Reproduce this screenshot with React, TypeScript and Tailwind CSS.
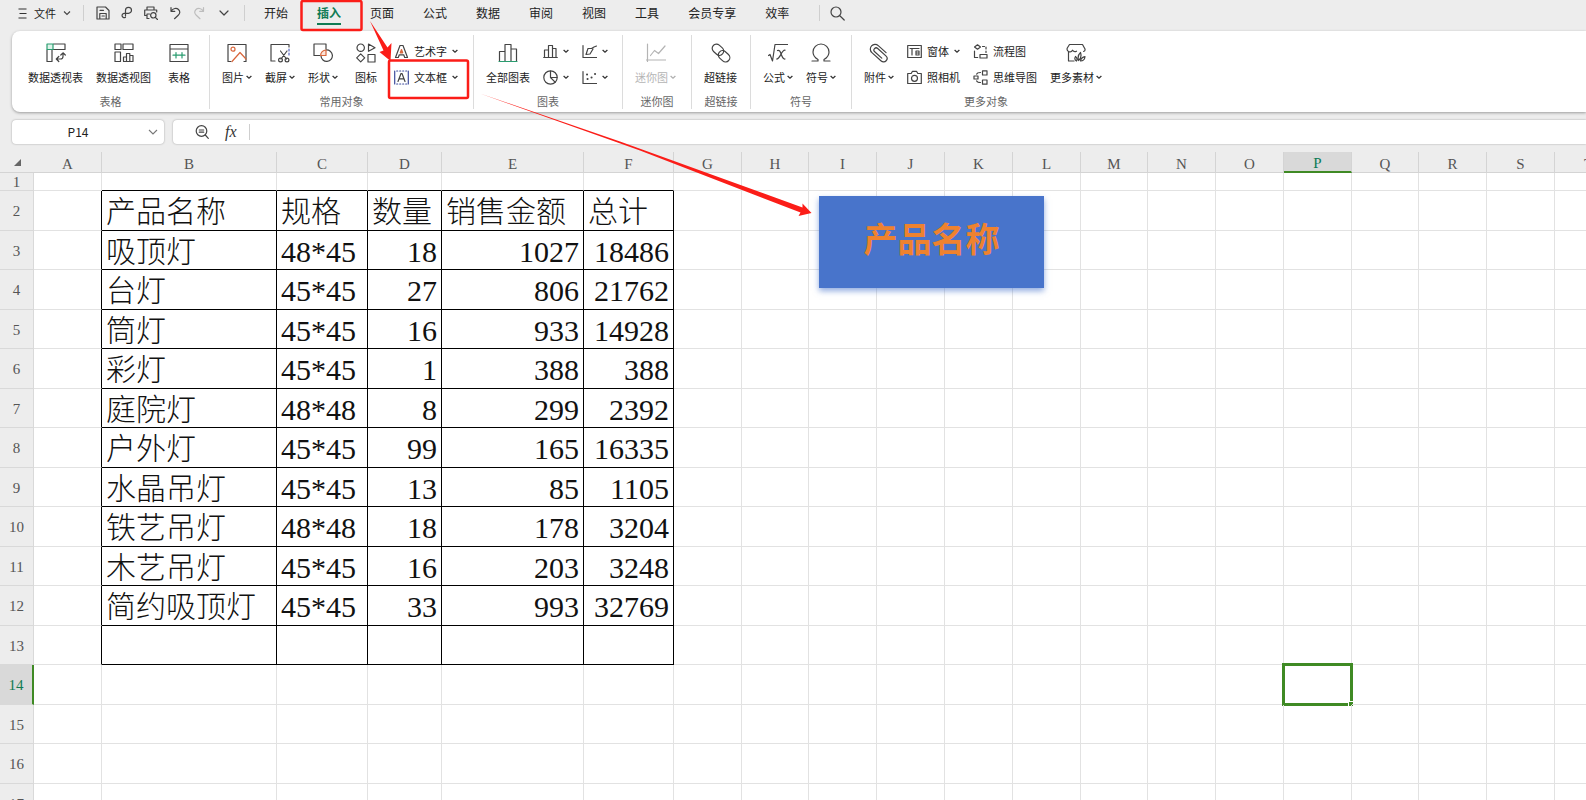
import React, { useState, ChangeEvent, ReactNode } from 'react'

const columns = [
  { name: 'A', width: 68 },
  { name: 'B', width: 175 },
  { name: 'C', width: 91 },
  { name: 'D', width: 74 },
  { name: 'E', width: 142 },
  { name: 'F', width: 90 },
  { name: 'G', width: 68 },
  { name: 'H', width: 67 },
  { name: 'I', width: 68 },
  { name: 'J', width: 68 },
  { name: 'K', width: 68 },
  { name: 'L', width: 68 },
  { name: 'M', width: 67 },
  { name: 'N', width: 68 },
  { name: 'O', width: 68 },
  { name: 'P', width: 68 },
  { name: 'Q', width: 67 },
  { name: 'R', width: 68 },
  { name: 'S', width: 68 },
  { name: 'T', width: 68 },
];

const rowHeaderWidth = 34;
const sheetWidth = columns.reduce((sum, col) => sum + col.width, rowHeaderWidth);

const rows: string[][] = [
  [],
  ['产品名称', '规格', '数量', '销售金额', '总计'],
  ['吸顶灯', '48*45', '18', '1027', '18486'],
  ['台灯', '45*45', '27', '806', '21762'],
  ['筒灯', '45*45', '16', '933', '14928'],
  ['彩灯', '45*45', '1', '388', '388'],
  ['庭院灯', '48*48', '8', '299', '2392'],
  ['户外灯', '45*45', '99', '165', '16335'],
  ['水晶吊灯', '45*45', '13', '85', '1105'],
  ['铁艺吊灯', '48*48', '18', '178', '3204'],
  ['木艺吊灯', '45*45', '16', '203', '3248'],
  ['简约吸顶灯', '45*45', '33', '993', '32769'],
  [],
  [],
  [],
  [],
  [],
];

const tabs = ['开始', '插入', '页面', '公式', '数据', '审阅', '视图', '工具', '会员专享', '效率'];

// Row 1 is short, the others share the same pitch
const rowHeight = (row: number) => {
  if (row === 1) return 18;
  return row % 2 === 0 ? 40 : 39;
};

const Icon = ({ size = 20, children }: { size?: number; children: ReactNode }) => (
  <svg width={size} height={size} viewBox={`0 0 ${size} ${size}`} fill="none" stroke="#444" strokeWidth="1.2" strokeLinejoin="round" strokeLinecap="round" aria-hidden="true" className="shrink-0">
    {children}
  </svg>
);

const Chevron = ({ light = false }: { light?: boolean }) => (
  <svg width="6" height="6" viewBox="0 0 6 6" fill="none" stroke={light ? '#b0b0b0' : '#333'} strokeWidth="1.3" aria-hidden="true" className="shrink-0">
    <path d="M.6 2 3 4.2 5.4 2" />
  </svg>
);

const BigButton = ({ icon, label, menu = false, disabled = false, width = 'w-auto' }: { icon: ReactNode; label: string; menu?: boolean; disabled?: boolean; width?: string }) => (
  <button type="button" disabled={disabled} className={`flex flex-col items-center gap-[6px] text-[11px] leading-4 whitespace-nowrap ${width} ${disabled ? 'text-[#b4b4b4]' : 'text-[#222]'}`}>
    {icon}
    <span className="flex items-center gap-[2px]">
      {label}
      {menu && <Chevron light={disabled} />}
    </span>
  </button>
);

const SmallButton = ({ icon, label, title, menu = false }: { icon: ReactNode; label?: string; title?: string; menu?: boolean }) => (
  <button type="button" aria-label={title} className="flex h-4 items-center gap-[5px] text-[11px] leading-4 whitespace-nowrap text-[#222]">
    {icon}
    {label}
    {menu && <Chevron />}
  </button>
);

const Stack = ({ children }: { children: ReactNode }) => (
  <div className="flex flex-col gap-[10px]">{children}</div>
);

const Group = ({ label, className, children }: { label: string; className: string; children: ReactNode }) => (
  <div className={`flex h-[74px] shrink-0 flex-col justify-between border-[#dcdcdc] ${className}`}>
    <div className="flex gap-[13px] pt-2 pl-3">{children}</div>
    <div className="text-center text-[11px] leading-4 text-[#666]">{label}</div>
  </div>
);

const QuickButton = ({ title, children }: { title: string; children: ReactNode }) => (
  <button type="button" aria-label={title} className="flex h-5 items-center">
    <Icon size={14}>{children}</Icon>
  </button>
);

const Divider = ({ className }: { className: string }) => (
  <span className={`h-4 w-px shrink-0 bg-[#cfcfcf] ${className}`} />
);

const TitleBar = ({ active, onChange }: { active: string; onChange: (tab: string) => void }) => (
  <div className="flex h-[31px] items-start pt-[3px] pl-[18px] text-[#222]">
    <button type="button" className="flex h-5 shrink-0 items-center text-[11px]">
      <svg width="9" height="11" viewBox="0 0 9 11" fill="none" stroke="#333" strokeWidth="1.1" aria-hidden="true">
        <path d="M.5 1h8M1.5 5.500h7M.5 10h8" />
      </svg>
      <span className="mx-[7px]">文件</span>
      <svg width="8" height="6" viewBox="0 0 8 6" fill="none" stroke="#444" strokeWidth="1.1" aria-hidden="true">
        <path d="m1 1.500 3 3 3-3" />
      </svg>
    </button>
    <Divider className="mt-[2px] ml-3" />
    <div className="ml-3 flex shrink-0 gap-[10px]">
      <QuickButton title="保存">
        <path d="M1 13V1h8.500L13 4.500V13zM3.800 13V7.500h6.400V13M4 4.300h3.500M6 10h2.300" />
      </QuickButton>
      <QuickButton title="输出">
        <path d="M5.500 10V4.300a3 3 0 1 1 3 3H4a2.200 2.200 0 1 0 1.500 4" />
      </QuickButton>
      <QuickButton title="打印预览">
        <path d="M3 4V1h7v3M3 9.500H.7V4h12v2M5 12.500H3V8h2.500" />
        <circle cx="9.300" cy="9.300" r="2.700" />
        <path d="m11.300 11.300 2.200 2.200" />
      </QuickButton>
      <QuickButton title="撤销">
        <path d="M3 1.500v3.800h3.800M3.200 5C5 2.300 8.500 1.500 10.500 3.500c2 2 1.500 4-.3 5.700L6.500 12.700" />
      </QuickButton>
      <QuickButton title="恢复">
        <path stroke="#bdbdbd" d="M11.500 1.500v3.800H7.700M11.300 5C9.500 2.300 6 1.500 4 3.500c-2 2-1.500 4 .3 5.700L8 12.700" />
      </QuickButton>
      <QuickButton title="更多">
        <path d="m4 5 4 4 4-4" />
      </QuickButton>
    </div>
    <Divider className="mt-[2px] ml-[14px]" />
    <nav className="ml-[19px] flex shrink-0 gap-[29px]">
      {tabs.map((tab) => (
        <button
          key={tab}
          type="button"
          onClick={() => onChange(tab)}
          className={`border-b-2 text-xs leading-5 whitespace-nowrap ${tab === active ? 'border-[#0f7b54] font-bold text-[#0f7b54]' : 'border-transparent'}`}
        >
          {tab}
        </button>
      ))}
    </nav>
    <Divider className="mt-[2px] ml-[30px]" />
    <button type="button" aria-label="搜索" className="ml-[10px] flex h-5 items-center">
      <Icon size={15}>
        <circle cx="6" cy="6" r="5" />
        <path d="m9.800 9.800 4.400 4.200" />
      </Icon>
    </button>
  </div>
);

const Ribbon = () => (
  <div className="ml-3 flex h-[81px] overflow-hidden rounded-l-lg bg-white pt-1 shadow-[0_1px_3px_rgba(0,0,0,0.35)]">
    <Group label="表格" className="w-[198px] border-r">
      <div className="flex gap-[11px] pl-[3px]">
        <BigButton width="w-[57px]" label="数据透视表" icon={
          <Icon>
            <path d="M7.500 1h11.500v5.500H7.500M1 7v11.500h5V7M10.500 16h4a2.500 2.500 0 0 0 2.500-2.500V10.500M12.800 13.500 10.300 16l2.500 2.500M14.800 12 17 9.800l2.300 2.200" />
            <path stroke="#2a9d70" fill="#dff3ea" d="M1 1h6v5.500H1z" />
          </Icon>
        } />
        <BigButton width="w-[57px]" label="数据透视图" icon={
          <Icon>
            <path d="M1 1h6v5.500H1zM9 1h10v5.500H9zM1 9h5.500v9.500H1zM9.500 18.500V14h3v4.500zM12.500 18.500V10.500h3.300v8M15.800 12.500H19v6H9.500" />
          </Icon>
        } />
        <BigButton width="w-8" label="表格" icon={
          <Icon>
            <path d="M1 1.500h18v17H1zM1 6h18" />
            <path stroke="#2a9d70" d="M4 12.200h12M7 9.500V15M13 9.500V15" />
          </Icon>
        } />
      </div>
    </Group>
    <Group label="常用对象" className="w-[264px] border-r">
      <BigButton label="图片" menu icon={
        <Icon>
          <path d="M4 18.500H1v-17h18v17h-2" />
          <circle cx="6" cy="6.200" r="2" stroke="#d9663b" />
          <path stroke="#d9663b" d="m5 18.500 8-9 6 6.500" />
        </Icon>
      } />
      <BigButton label="截屏" menu icon={
        <Icon>
          <path d="M5 18H1V1.500h18V4" />
          <path strokeDasharray="2 2" d="M19 6v7" stroke="#5565c0" />
          <path d="m10.500 8 6 8M17 8l-6 8" />
          <circle cx="10.500" cy="17" r="1.900" />
          <circle cx="17" cy="17" r="1.900" />
        </Icon>
      } />
      <BigButton label="形状" menu icon={
        <Icon>
          <path d="M7 12.500H1V1h12v5" />
          <path d="M13 7a5.700 5.700 0 1 1-5 6" />
          <path stroke="#d9663b" fill="#fbe3d8" d="M7.600 12.500a5.500 5.500 0 0 1 5.400-5.500v5.500z" />
        </Icon>
      } />
      <BigButton label="图标" width="w-[30px]" icon={
        <Icon>
          <circle cx="4.700" cy="4.700" r="3.700" />
          <path d="m12.500 1 6.500 3.700-6.500 3.600zM4.700 10.800l4 4-4 4-4-4zM12 11.500h7V19h-7z" />
        </Icon>
      } />
      <Stack>
        <SmallButton label="艺术字" menu icon={
          <Icon size={15}>
            <path d="M1.500 13.500 6 1.500h3l4.500 12h-2.800l-1-2.700H5.300l-1 2.700z" />
            <path stroke="#d9663b" fill="#d9663b" d="m7.500 5.500 1.200 3.300H6.300z" />
          </Icon>
        } />
        <SmallButton label="文本框" menu icon={
          <Icon size={15}>
            <path stroke="#3c4a9c" d="M.7 1v13M14.300 1v13" />
            <path stroke="#3c4a9c" strokeDasharray="1 2" d="M2.700 1h10M2.700 14h10" />
            <path d="M4 11.500 7 3.500h1l3 8M5 8.800h5" />
          </Icon>
        } />
      </Stack>
    </Group>
    <Group label="图表" className="w-[149px] border-r">
      <BigButton label="全部图表" icon={
        <Icon>
          <path d="M1.500 18V8.500H7V18M7 9V1.500h6V18M13 6h5.500v12" />
          <path stroke="#2a9d70" d="M1 18.500h18" />
        </Icon>
      } />
      <Stack>
        <SmallButton title="柱形图" menu icon={
          <Icon size={15}>
            <path d="M1.500 13V6h4v7M5.500 13V1.500h4V13M9.500 4.500h3.500V13M.7 13.500h13.600" />
          </Icon>
        } />
        <SmallButton title="饼图" menu icon={
          <Icon size={15}>
            <circle cx="7.500" cy="7.500" r="6.700" />
            <path d="M7.500 1v6.500H14M7.500 7.500l4.600 4.700" />
          </Icon>
        } />
      </Stack>
      <Stack>
        <SmallButton title="折线图" menu icon={
          <Icon size={15}>
            <path d="M1 1.500v12h13.500M4 10.500l2-6h3.500L12 3l2.500-1M4 10.500l4-.5 3-5" />
          </Icon>
        } />
        <SmallButton title="散点图" menu icon={
          <Icon size={15}>
            <path d="M1 1.500v12h13.500" />
            <path strokeWidth="2" d="M5 4.500h.1M5.500 9h.1M9.500 7.500h.1M13 4h.1" />
          </Icon>
        } />
      </Stack>
    </Group>
    <Group label="迷你图" className="w-[69px] border-r">
      <BigButton label="迷你图" menu disabled icon={
        <Icon>
          <path stroke="#b4b4b4" d="M1.500 1v17.500M.5 17h19M4.500 12.500l4-5 4 3 6.500-7.500" />
        </Icon>
      } />
    </Group>
    <Group label="超链接" className="w-[59px] border-r">
      <BigButton label="超链接" icon={
        <Icon>
          <rect x=".7" y="2.500" width="12.500" height="8.500" rx="4.200" transform="rotate(42 7 6.700)" />
          <rect x="6.800" y="9" width="12.500" height="8.500" rx="4.200" transform="rotate(42 13 13.300)" />
        </Icon>
      } />
    </Group>
    <Group label="符号" className="w-[101px] border-r">
      <BigButton label="公式" menu icon={
        <Icon>
          <path d="M.5 12.500 2 11.500l2.500 6.500L7 1.500h12.500M9.500 7.500c4-2 3.500 9.500 7.500 8.500M17 7.200c-3.500-.5-5 9.500-8.500 8.800" />
        </Icon>
      } />
      <BigButton label="符号" menu icon={
        <Icon>
          <path d="M1 18h6v-1.500C3.500 14.500 2 12 2 9a8 8 0 0 1 16 0c0 3-1.500 5.500-5 7.500V18h6" />
        </Icon>
      } />
    </Group>
    <Group label="更多对象" className="w-[268px]">
      <BigButton label="附件" menu icon={
        <Icon>
          <path transform="rotate(42 10 10)" d="M15 5H4.500a4.500 4.500 0 0 0 0 9.500H17a3.500 3.500 0 0 0 0-7H6a2.200 2.200 0 0 0 0 4.500h9.500" />
        </Icon>
      } />
      <Stack>
        <SmallButton label="窗体" menu icon={
          <Icon size={15}>
            <path d="M.7 1.500h13.600v12H.7zM3 4.500h9M5 4.500v6.500M9 7h3v4H9zM9 9h3" />
          </Icon>
        } />
        <SmallButton label="照相机" icon={
          <Icon size={15}>
            <path d="M.7 3.500h3.500L5.500 1.300h4l1.300 2.200h3.500v10H.7z" />
            <circle cx="7.500" cy="8.300" r="3" />
          </Icon>
        } />
      </Stack>
      <Stack>
        <SmallButton label="流程图" icon={
          <Icon size={15}>
            <path d="M4.500.8 7.500 3l-3 2.200L1.500 3zM7 10.500h7V14H7zM4.700 13.500H1.500V7" />
            <path strokeDasharray="2 2" d="M9.500 2.500H13v6" />
          </Icon>
        } />
        <SmallButton label="思维导图" icon={
          <Icon size={15}>
            <path d="M9.500.8h4.500v4.200H9.500zM9.500 10h4.500v4.200H9.500zM1 6h4v3H1z" />
            <path d="M7.500 2.500C4.800 2.500 4 3 3.700 4.200M3.700 10.800C4 12 4.800 12.500 7.500 12.500" />
          </Icon>
        } />
      </Stack>
      <BigButton label="更多素材" menu icon={
        <Icon>
          <path d="M8 18H2.500V8.500C1 7.500.7 6.500 1.300 5L3.500 1.500h13L19 6c.3 1.500-.5 2.300-1.500 2.500M2.500 8.500C4 9.300 5.700 8.700 6.500 7.200 7.500 8.700 9 9 10.500 8.200M10.500 18c-2-1.300-2-3-1-4.500 1.500 1.200 2 2.700 1 4.500zM12.500 17.500c-1-4 .3-6.500 2-8 1 3 .5 6-2 8zM14.500 18c.5-2.500 2-4 4.500-4.300-.3 2.500-1.700 4.300-4.500 4.300z" />
        </Icon>
      } />
    </Group>
  </div>
);

const FormulaBar = () => {
  const [cell, setCell] = useState('P14');
  const [formula, setFormula] = useState('');

  const handleCellChange = (e: ChangeEvent<HTMLInputElement>) => {
    setCell(e.target.value);
  };

  const handleFormulaChange = (e: ChangeEvent<HTMLInputElement>) => {
    setFormula(e.target.value);
  };

  return (
    <div className="mt-2 mb-2 ml-3 flex h-6 gap-[9px]">
      <div className="flex w-[152px] shrink-0 items-center rounded bg-white pr-[6px] shadow-[0_0_2px_rgba(0,0,0,0.35)]">
        <input
          type="text"
          aria-label="名称框"
          value={cell}
          onChange={handleCellChange}
          className="w-0 flex-1 pr-1 text-center text-xs text-[#222] outline-none"
        />
        <button type="button" aria-label="选择名称">
          <svg width="10" height="6" viewBox="0 0 10 6" fill="none" stroke="#777" strokeWidth="1.1" aria-hidden="true">
            <path d="m1 1 4 4 4-4" />
          </svg>
        </button>
      </div>
      <div className="flex flex-1 items-center rounded-l bg-white pl-[22px] shadow-[0_0_2px_rgba(0,0,0,0.35)]">
        <button type="button" aria-label="查看公式">
          <Icon size={14}>
            <circle cx="6.500" cy="6" r="5.300" />
            <path d="m10.300 10 3 3.300M4.300 5h4.400M4.300 7.200h4.400" />
          </Icon>
        </button>
        <button type="button" aria-label="插入函数" className="ml-4 font-['Liberation_Serif',serif] text-base leading-5 text-[#333] italic">fx</button>
        <Divider className="ml-3" />
        <input
          type="text"
          aria-label="编辑栏"
          value={formula}
          onChange={handleFormulaChange}
          className="min-w-0 flex-1 px-2 text-xs outline-none"
        />
      </div>
    </div>
  );
};

// Grid line colours: black round B2:F13, light grey elsewhere
const cellBorder = (row: number, col: number) => {
  const right = row >= 2 && row <= 13 && col <= 5 ? 'border-r-black' : 'border-r-[#e2e2e2]';
  const bottom = row <= 13 && col >= 1 && col <= 5 ? 'border-b-black' : 'border-b-[#e2e2e2]';
  return `${right} ${bottom}`;
};

const Sheet = () => (
  <div className="relative flex-1 overflow-hidden bg-white">
    <table className="table-fixed border-separate border-spacing-0 font-['Liberation_Serif','Noto_Sans_CJK_SC',serif]" style={{ width: sheetWidth }}>
      <colgroup>
        <col style={{ width: rowHeaderWidth }} />
        {columns.map((col) => (
          <col key={col.name} style={{ width: col.width }} />
        ))}
      </colgroup>
      <thead>
        <tr className="h-[21px] bg-[#ededed] text-[15px] leading-4 text-[#555]">
          <th className="border-b border-b-[#d4d4d4] p-0">
            <svg width="7" height="7" viewBox="0 0 7 7" aria-hidden="true" className="ml-[14px]">
              <path d="M7 0v7H0z" fill="#666" />
            </svg>
          </th>
          {columns.map((col) => (
            <th
              key={col.name}
              className={`border-r border-r-[#d4d4d4] px-0 pt-[3px] pb-0 font-normal ${col.name === 'P' ? 'border-b-2 border-b-[#3f8a24] bg-[#d9d9d9] text-[#0f7b54]' : 'border-b border-b-[#d4d4d4]'}`}
            >
              {col.name}
            </th>
          ))}
        </tr>
      </thead>
      <tbody>
        {rows.map((values, index) => {
          const row = index + 1;
          return (
            <tr key={row} style={{ height: rowHeight(row) }}>
              <th
                className={`border-b border-b-[#d9d9d9] px-0 pt-[2px] pb-0 text-[15px] leading-[15px] font-normal ${row === 14 ? 'border-r-2 border-r-[#3f8a24] bg-[#d9d9d9] text-[#0f7b54]' : 'border-r border-r-[#d9d9d9] bg-[#ededed] text-[#555]'}`}
              >
                {row}
              </th>
              {columns.map((col, c) => (
                <td
                  key={col.name}
                  className={`relative border-r border-b px-1 pt-[3px] pb-0 text-[30px] leading-[30px] font-light whitespace-nowrap text-[#111] ${cellBorder(row, c)} ${c >= 3 && row > 2 ? 'text-right' : ''}`}
                >
                  {c > 0 && values[c - 1]}
                  {col.name === 'P' && row === 14 && (
                    <span className="absolute -inset-[2px] border-3 border-[#3f8a24]">
                      <span className="absolute -right-[4px] -bottom-[4px] size-[6px] border border-white bg-[#3f8a24]" />
                    </span>
                  )}
                </td>
              ))}
            </tr>
          );
        })}
      </tbody>
    </table>
    <div className="absolute top-[44px] left-[819px] flex h-[92px] w-[225px] items-center justify-center bg-[#4874cb] pb-2 text-[34px] leading-10 font-bold text-[#ee822f] shadow-[0_3px_6px_rgba(72,116,203,0.6)]">
      产品名称
    </div>
  </div>
);

const Annotations = () => (
  <svg width="820" height="220" viewBox="0 0 820 220" aria-hidden="true" className="pointer-events-none absolute top-0 left-0">
    <g fill="none" stroke="#fb1d18" strokeWidth="2.500">
      <rect x="301.500" y="1" width="60" height="29" rx="1.500" />
      <rect x="389" y="60.500" width="79" height="37.500" rx="1.500" />
    </g>
    <path fill="#fb1d18" d="M370 21 387.500 47.500 391.500 43 390.500 61 379.500 52 383.500 50.500z" />
    <path fill="#fb1d18" d="M480 93.500 620 141.500 802.500 207.500 802.500 203.500 811.500 213 798.500 216 800.500 212.500 640 150.500z" />
  </svg>
);

const App = () => {
  const [active, setActive] = useState('插入');

  return (
    <div className="relative flex h-screen flex-col overflow-hidden bg-[#ededed] font-['Noto_Sans_CJK_SC',sans-serif]">
      <TitleBar active={active} onChange={setActive} />
      <Ribbon />
      <FormulaBar />
      <Sheet />
      <Annotations />
    </div>
  );
}

export default App;
